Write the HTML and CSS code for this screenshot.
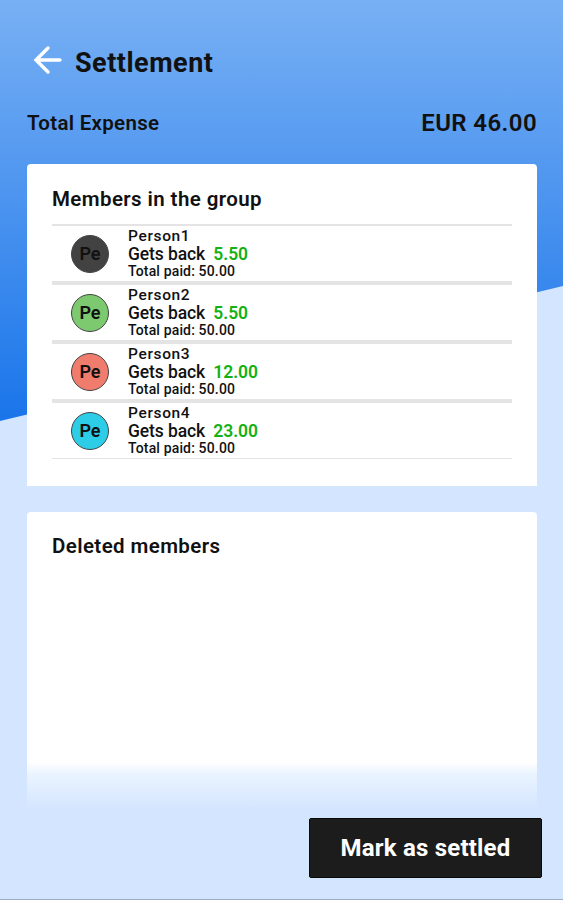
FILE: index.html
```html
<!DOCTYPE html>
<html lang="en">

<head>
  <meta charset="UTF-8">
  <meta name="viewport" content="width=device-width, initial-scale=1.0">
  <title>Settlement</title>
  <link rel="stylesheet" href="styles.css">
</head>

<body>
  <div class="screen">
    <!-- Header -->
    <header class="top-bar">
      <svg class="back-icon" viewBox="0 0 30 30" aria-label="Back">
        <path d="M27 15H3M15 3L3 15L15 27" />
      </svg>
      <h1>Settlement</h1>
    </header>

    <div class="total-row">
      <span class="total-label">Total Expense</span>
      <span class="total-amount">EUR 46.00</span>
    </div>

    <!-- Members Card -->
    <section class="card members-card">
      <h2>Members in the group</h2>
      <ul class="member-list">
        <li class="member">
          <span class="avatar avatar-dark">Pe</span>
          <div class="member-info">
            <span class="member-name">Person1</span>
            <span class="member-balance">Gets back <b>5.50</b></span>
            <span class="member-paid">Total paid: 50.00</span>
          </div>
        </li>
        <li class="member">
          <span class="avatar avatar-green">Pe</span>
          <div class="member-info">
            <span class="member-name">Person2</span>
            <span class="member-balance">Gets back <b>5.50</b></span>
            <span class="member-paid">Total paid: 50.00</span>
          </div>
        </li>
        <li class="member">
          <span class="avatar avatar-red">Pe</span>
          <div class="member-info">
            <span class="member-name">Person3</span>
            <span class="member-balance">Gets back <b>12.00</b></span>
            <span class="member-paid">Total paid: 50.00</span>
          </div>
        </li>
        <li class="member">
          <span class="avatar avatar-cyan">Pe</span>
          <div class="member-info">
            <span class="member-name">Person4</span>
            <span class="member-balance">Gets back <b>23.00</b></span>
            <span class="member-paid">Total paid: 50.00</span>
          </div>
        </li>
      </ul>
    </section>

    <!-- Deleted Members Card -->
    <section class="card deleted-card">
      <h2>Deleted members</h2>
    </section>

    <button class="settle-btn">Mark as settled</button>
  </div>
</body>

</html>
```

FILE: styles.css
```css
* {
  box-sizing: border-box;
}

body {
  margin: 0;
  font-family: Roboto, "Liberation Sans", sans-serif;
  color: #111;
  background-color: #d4e6ff;
}

.screen {
  position: relative;
  display: flex;
  flex-direction: column;
  height: 900px;
  padding: 40px 26px 0 27px;
  border-bottom: 1px solid #9dadc6;
  overflow: hidden;
}

/* Slanted blue backdrop */
.screen::before {
  content: "";
  position: absolute;
  inset: 0 0 auto;
  height: 421px;
  z-index: -1;
  background: linear-gradient(#78b0f4, #1a75ea);
  clip-path: polygon(0 0, 100% 0, 100% 286px, 0 100%);
}

/* Header */
.top-bar {
  display: flex;
  align-items: center;
  height: 44px;
  padding-left: 6px;
}

.back-icon {
  width: 30px;
  height: 30px;
  margin: -5px 12px 0 0;
  fill: none;
  stroke: #fff;
  stroke-width: 3.4;
  stroke-linecap: round;
}

h1 {
  margin: 1px 0 0;
  font-size: 27px;
  font-weight: 700;
  letter-spacing: 0.5px;
}

.total-row {
  display: flex;
  justify-content: space-between;
  align-items: center;
  height: 32px;
  margin: 23px 0 25px;
  font-weight: 600;
}

.total-label {
  font-size: 20.5px;
  letter-spacing: 0.3px;
}

.total-amount {
  font-size: 24px;
  letter-spacing: 0.4px;
}

/* Cards */
.card {
  flex: none;
  padding: 23px 25px 0;
  background-color: #fff;
}

.card h2 {
  margin: 0;
  font-size: 20.5px;
  line-height: 24px;
  font-weight: 600;
  letter-spacing: 0.4px;
}

.members-card {
  height: 322px;
  border-radius: 4px 4px 0 0;
}

.deleted-card {
  height: 300px;
  margin-top: 26px;
  padding-top: 22px;
  border-radius: 4px 4px 0 0;
  background: linear-gradient(#fff 250px, #eaf4ff 262px, #d4e6ff 296px);
}

/* Member list */
.member-list {
  margin: 13px 0 0;
  padding: 0;
  list-style: none;
}

.member {
  display: flex;
  align-items: center;
  height: 59px;
  padding-left: 19px;
  border-top: 2px solid #e4e4e4;
  border-bottom: 2px solid #e4e4e4;
}

.member:last-child {
  height: 58px;
  border-bottom-width: 1px;
}

.avatar {
  width: 38px;
  height: 38px;
  margin-right: 19px;
  border: 1px solid #444;
  border-radius: 50%;
  font-size: 18px;
  line-height: 36px;
  font-weight: 600;
  text-align: center;
}

.avatar-dark {
  background-color: #424242;
}

.avatar-green {
  background-color: #7cc96f;
}

.avatar-red {
  background-color: #f07c6e;
}

.avatar-cyan {
  background-color: #2dcde8;
}

.member-info {
  display: flex;
  flex-direction: column;
  padding-bottom: 1px;
  font-weight: 500;
}

.member-name {
  font-size: 15.5px;
  line-height: 18px;
  letter-spacing: 0.65px;
}

.member-balance {
  font-size: 17.5px;
  line-height: 19px;
  letter-spacing: -0.1px;
}

.member-balance b {
  margin-left: 4px;
  font-weight: 600;
  color: #13b113;
}

.member-paid {
  font-size: 14px;
  line-height: 15px;
  letter-spacing: 0.15px;
}

/* Floating action */
.settle-btn {
  position: absolute;
  right: 21px;
  bottom: 21px;
  width: 233px;
  height: 60px;
  padding: 0;
  border: 1px solid #0a0a0a;
  border-radius: 2px;
  background-color: #1c1c1c;
  color: #fff;
  font-family: inherit;
  font-size: 24px;
  font-weight: 700;
  letter-spacing: 0.2px;
}
```
